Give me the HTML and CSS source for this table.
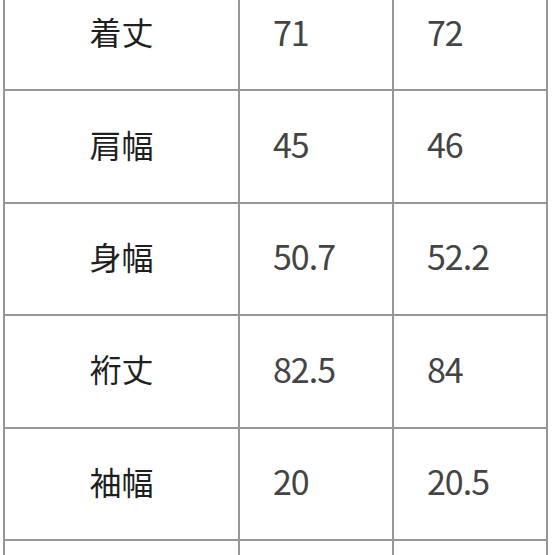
FILE: index.html
```html
<!DOCTYPE html>
<html lang="ja">
<head>
<meta charset="utf-8">
<title>サイズ表</title>
<link rel="stylesheet" href="styles.css">
</head>
<body>
<table class="size-table">
  <colgroup>
    <col class="col-label">
    <col class="col-value">
    <col class="col-value">
  </colgroup>
  <tbody>
    <tr><td class="label">着丈</td><td class="value">71</td><td class="value">72</td></tr>
    <tr><td class="label">肩幅</td><td class="value">45</td><td class="value">46</td></tr>
    <tr><td class="label">身幅</td><td class="value">50.7</td><td class="value">52.2</td></tr>
    <tr><td class="label">裄丈</td><td class="value">82.5</td><td class="value">84</td></tr>
    <tr><td class="label">袖幅</td><td class="value">20</td><td class="value">20.5</td></tr>
    <tr><td class="label"></td><td class="value"></td><td class="value"></td></tr>
  </tbody>
</table>
</body>
</html>
```

FILE: styles.css
```css
html, body {
  margin: 0;
  padding: 0;
  background: #ffffff;
  overflow: hidden;
}

.size-table {
  border-collapse: collapse;
  table-layout: fixed;
  width: 544px;
  margin: -21px 0 0 3px;
  font-family: "Noto Sans CJK JP", "Noto Sans", sans-serif;
}

.col-label { width: 235px; }
.col-value { width: 154px; }

.size-table td {
  border: 2px solid #969696;
  height: 104.4px;
  padding: 0 0 6px 0;
  vertical-align: middle;
}

.size-table tr:first-child td {
  border-top: none;
}

.label {
  text-align: center;
  font-size: 32px;
  color: #1f1f1f;
}

.value {
  text-align: left;
  padding-left: 33px !important;
  font-size: 34px;
  letter-spacing: -1px;
  color: #444444;
}
```
